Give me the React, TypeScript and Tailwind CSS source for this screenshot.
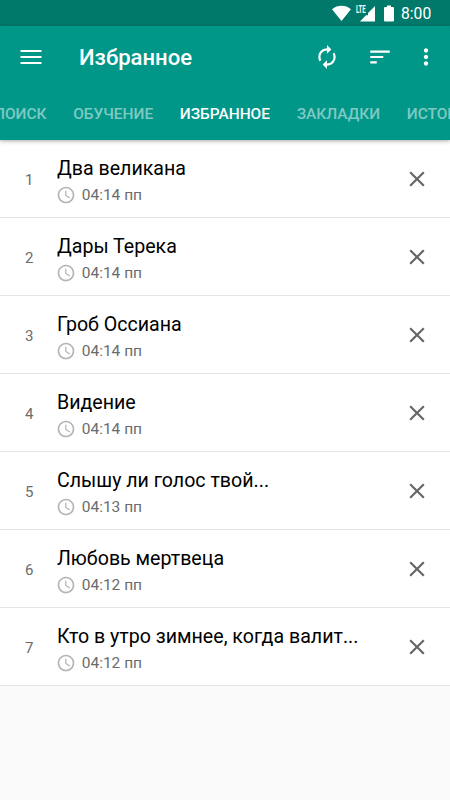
import React from "react";

type Poem = { title: string; time: string };

const poems: Poem[] = [
  { title: "Два великана", time: "04:14 пп" },
  { title: "Дары Терека", time: "04:14 пп" },
  { title: "Гроб Оссиана", time: "04:14 пп" },
  { title: "Видение", time: "04:14 пп" },
  { title: "Слышу ли голос твой...", time: "04:13 пп" },
  { title: "Любовь мертвеца", time: "04:12 пп" },
  { title: "Кто в утро зимнее, когда валит...", time: "04:12 пп" },
];

const tabs = ["ПОИСК", "ОБУЧЕНИЕ", "ИЗБРАННОЕ", "ЗАКЛАДКИ", "ИСТОРИЯ"];
const activeTab = "ИЗБРАННОЕ";

// Material icon paths on a 24px grid
const icons = {
  menu: "M3 18h18v-1.7H3V18zm0-5.1h18v-1.7H3v1.7zM3 6v1.7h18V6H3z",
  sync: "M12 6v3l4-4-4-4v3c-4.42 0-8 3.58-8 8 0 1.57.46 3.03 1.24 4.26L6.7 14.8c-.45-.83-.7-1.79-.7-2.8 0-3.31 2.69-6 6-6zm6.76 1.74L17.3 9.2c.44.84.7 1.79.7 2.8 0 3.31-2.69 6-6 6v-3l-4 4 4 4v-3c4.42 0 8-3.58 8-8 0-1.57-.46-3.03-1.24-4.26z",
  sort: "M3 18h6v-2H3v2zM3 6v2h18V6H3zm0 7h12v-2H3v2z",
  more: "M12 8c1.1 0 2-.9 2-2s-.9-2-2-2-2 .9-2 2 .9 2 2 2zm0 2c-1.1 0-2 .9-2 2s.9 2 2 2 2-.9 2-2-.9-2-2-2zm0 6c-1.1 0-2 .9-2 2s.9 2 2 2 2-.9 2-2-.9-2-2-2z",
  close: "M19 6.41L17.59 5 12 10.59 6.41 5 5 6.41 10.59 12 5 17.59 6.41 19 12 13.41 17.59 19 19 17.59 13.41 12z",
  clock: "M11.99 2C6.47 2 2 6.48 2 12s4.47 10 9.99 10C17.52 22 22 17.52 22 12S17.52 2 11.99 2zM12 20c-4.42 0-8-3.58-8-8s3.58-8 8-8 8 3.58 8 8-3.58 8-8 8zm.5-13H11v6l5.25 3.15.75-1.23-4.5-2.67z",
};

const Icon = ({ name, className }: { name: keyof typeof icons; className: string }) => (
  <svg viewBox="0 0 24 24" fill="currentColor" className={`shrink-0 ${className}`}>
    <path d={icons[name]} />
  </svg>
);

const StatusBar = () => (
  <div className="flex h-[26px] items-center bg-[#00796b] pl-[332px] text-white">
    <svg viewBox="0 0 19 17" className="h-[17px] w-[19px] shrink-0" fill="currentColor">
      <path d="M0 4.2C5.4-.3 13.6-.3 19 4.2L9.5 16Z" />
    </svg>
    <div className="relative ml-[5px] h-[17px] w-[19px] shrink-0">
      <span className="absolute left-0 top-0 origin-left scale-x-[0.54] text-[11px] font-bold leading-[10px]">
        LTE
      </span>
      <svg viewBox="0 0 19 17" className="size-full" fill="currentColor">
        <path d="M4 16.5L10 10.3H12V8L19 1V16.5Z" />
      </svg>
    </div>
    <svg viewBox="0 0 10 17" className="ml-[9px] h-[17px] w-[10px] shrink-0" fill="currentColor">
      <path d="M0 3Q0 2 1 2H3V.5H7V2H9Q10 2 10 3V15.5Q10 16.5 9 16.5H1Q0 16.5 0 15.5Z" />
    </svg>
    <span className="ml-[7px] mt-[2px] text-[15.7px] leading-[20px]">8:00</span>
  </div>
);

const Toolbar = () => (
  <div className="flex h-[61px] items-center text-white">
    <Icon name="menu" className="ml-[16.5px] size-[28px]" />
    <h1 className="ml-[34.5px] mt-[3px] text-[22.1px] font-medium">Избранное</h1>
    <Icon name="sync" className="ml-auto size-[26px]" />
    <Icon name="sort" className="ml-[27px] size-[26px]" />
    <Icon name="more" className="ml-[20px] mr-[11px] size-[26px]" />
  </div>
);

const Tabs = () => (
  <nav className="-ml-[6px] flex h-[56px] items-center gap-[26.7px] whitespace-nowrap text-[15.45px] font-medium">
    {tabs.map((tab) => (
      <span key={tab} className={tab === activeTab ? "text-white" : "text-white/50"}>
        {tab}
      </span>
    ))}
  </nav>
);

const PoemRow = ({ index, poem }: { index: number; poem: Poem }) => (
  <li className="flex h-[78px] items-center border-b border-[#e4e4e4] bg-white">
    <span className="w-[57px] shrink-0 pl-[25px] pt-[4px] text-[15px] text-[#6b6b6b]">{index}</span>
    <div className="flex-1 pt-[6px]">
      <div className="text-[19.6px] leading-[28px] text-black">{poem.title}</div>
      <div className="flex items-center text-[15.5px] leading-[25px] text-[#6b6b6b]">
        <Icon name="clock" className="-ml-[0.8px] -mt-px size-[20px] text-[#b4b4b4]" />
        <span className="ml-[5.5px]">{poem.time}</span>
      </div>
    </div>
    <Icon name="close" className="mr-[20px] mt-px size-[26px] text-[#666]" />
  </li>
);

export default function App() {
  return (
    <div className="h-[800px] w-[450px] overflow-hidden bg-[#fafafa] font-['Roboto',sans-serif]">
      <StatusBar />
      <header className="relative h-[114px] bg-[#009688] shadow-[0_1px_4px_rgba(0,0,0,0.35)]">
        <Toolbar />
        <Tabs />
      </header>
      <ul>
        {poems.map((poem, i) => (
          <PoemRow key={poem.title} index={i + 1} poem={poem} />
        ))}
      </ul>
    </div>
  );
}
